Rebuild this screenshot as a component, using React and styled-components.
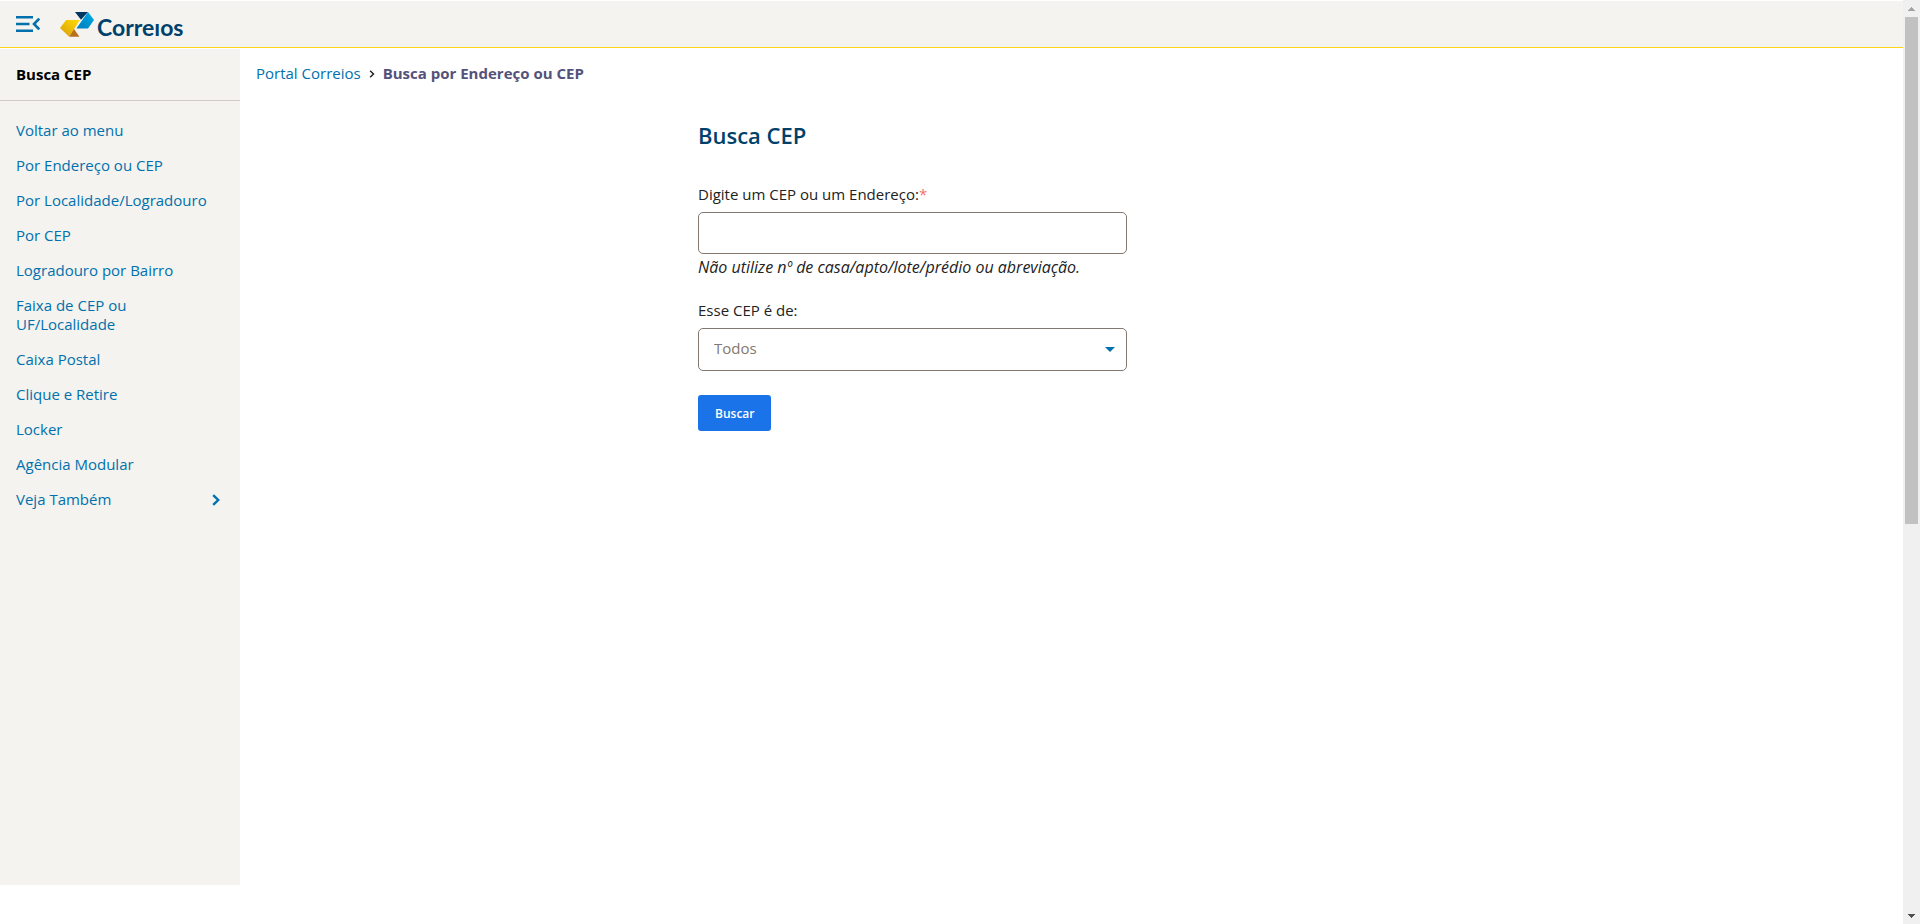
import React from "react";
import styled, { createGlobalStyle } from "styled-components";

const GlobalStyle = createGlobalStyle`
  *, *::before, *::after { box-sizing: border-box; }
  body {
    margin: 0;
    background: #fff;
    color: #222;
    font-family: "Trebuchet MS", "Open Sans", sans-serif;
    font-size: 15px;
    line-height: 19px;
  }
  button, input, select { font: inherit; }
`;

const Shell = styled.div`
  display: flex;
  min-height: 100vh;
`;

const Page = styled.div`
  flex: 1;
  min-width: 0;
`;

const Header = styled.header`
  display: flex;
  align-items: center;
  gap: 20px;
  height: 47px;
  margin-top: 1px;
  padding: 0 16px;
  background: #f4f3ef;
  border-bottom: 1px solid #ffd41a;
`;

const MenuButton = styled.button`
  display: flex;
  padding: 0;
  border: 0;
  background: none;
  color: #0071ad;
  cursor: pointer;
`;

const Brand = styled.a`
  display: flex;
  align-items: center;
  gap: 3px;
  color: #00416b;
  text-decoration: none;
`;

const BrandName = styled.span`
  padding-top: 6px;
  font-family: Lato, sans-serif;
  font-size: 23px;
  font-weight: 700;
  line-height: 24px;
`;

const Body = styled.div`
  display: flex;
  margin-top: 1px;
  min-height: calc(100vh - 88px);
`;

const Sidebar = styled.nav`
  flex: 0 0 240px;
  background: #f4f3ef;
`;

const SidebarTitle = styled.h2`
  margin: 0;
  padding: 16px;
  border-bottom: 1px solid #d1cbc7;
  color: #000;
  font-size: 15px;
  font-weight: 700;
  line-height: 19px;
`;

const Menu = styled.ul`
  display: flex;
  flex-direction: column;
  gap: 16px;
  margin: 0;
  padding: 20px 16px;
  list-style: none;
`;

const MenuLink = styled.a`
  display: flex;
  align-items: center;
  justify-content: space-between;
  padding-right: 4px;
  color: #0071ad;
  text-decoration: none;
`;

const MenuLabel = styled.span`
  white-space: pre-line;
`;

const Main = styled.main`
  flex: 1;
  min-width: 0;
  padding: 15px 16px;
`;

const Breadcrumb = styled.div`
  display: flex;
  align-items: center;
  gap: 8px;
`;

const CrumbLink = styled.a`
  color: #0071ad;
  text-decoration: none;
`;

const CrumbCurrent = styled.strong`
  color: #54527a;
  font-weight: 700;
`;

const Form = styled.form`
  max-width: 747px;
  margin: 38px auto 0;
`;

const FormTitle = styled.h1`
  margin: 0 0 36px;
  color: #00416b;
  font-size: 22px;
  font-weight: 600;
  line-height: 28px;
`;

const Field = styled.div`
  display: flex;
  flex-direction: column;
  width: 429px;
  max-width: 100%;
  margin-bottom: 24px;
`;

const Label = styled.label`
  margin-bottom: 8px;
`;

const Required = styled.span`
  color: #f0726a;
`;

const TextInput = styled.input`
  height: 42px;
  padding: 0 16px;
  border: 1px solid #83786f;
  border-radius: 5px;
  background: #fff;
  color: #83786f;
`;

const Hint = styled.em`
  margin-top: 4px;
  font-size: 16px;
`;

const SelectBox = styled.div`
  display: grid;
  align-items: center;
  > * { grid-area: 1 / 1; }
  > svg { justify-self: end; margin-right: 12px; pointer-events: none; }
`;

const Select = styled.select`
  width: 100%;
  height: 43px;
  padding: 0 32px 2px 15px;
  appearance: none;
  border: 1px solid #83786f;
  border-radius: 5px;
  background: #fff;
  color: #83786f;
`;

const SubmitButton = styled.button`
  height: 36px;
  padding: 0 17px;
  border: 0;
  border-radius: 3px;
  background: #1a73e8;
  color: #fff;
  font-size: 12px;
  font-weight: 600;
  cursor: pointer;
`;

const ScrollRail = styled.div`
  position: sticky;
  top: 0;
  display: flex;
  flex: 0 0 17px;
  flex-direction: column;
  align-items: center;
  height: 100vh;
  background: #f0f0f0;
`;

const ScrollArrow = styled.div`
  display: flex;
  flex: 0 0 17px;
  align-items: center;
  color: ${(p) => (p.$muted ? "#a3a3a3" : "#505050")};
`;

const ScrollTrack = styled.div`
  flex: 1;
  width: 13px;
`;

const ScrollThumb = styled.div`
  height: 57%;
  background: #c1c1c1;
`;

const menu = [
  "Voltar ao menu",
  "Por Endereço ou CEP",
  "Por Localidade/Logradouro",
  "Por CEP",
  "Logradouro por Bairro",
  "Faixa de CEP ou\nUF/Localidade",
  "Caixa Postal",
  "Clique e Retire",
  "Locker",
  "Agência Modular",
];

const MenuIcon = () => (
  <svg width="24" height="16" viewBox="0 0 24 16" fill="none" stroke="currentColor" strokeWidth="2.6" aria-hidden="true">
    <path d="M0 1.3H17M0 8H13.5M0 14.7H17M23.2 2.6L18 8l5.2 5.4" />
  </svg>
);

const Symbol = () => (
  <svg width="34" height="25" viewBox="0 0 34 25" aria-hidden="true">
    <defs>
      <linearGradient id="gold" x1="0" y1="1" x2="1" y2="0">
        <stop offset="0" stopColor="#d79b10" />
        <stop offset="1" stopColor="#ffdd00" />
      </linearGradient>
      <linearGradient id="sky" x1="0" y1="1" x2="1" y2="0">
        <stop offset="0" stopColor="#007cba" />
        <stop offset="1" stopColor="#00abea" />
      </linearGradient>
    </defs>
    <path d="M6.2 8H19.8L9.2 24.8L0 16Z" fill="url(#gold)" />
    <path d="M14 17L19.4 24.8H9.2Z" fill="#b96f1c" />
    <path d="M15 0H28L21 7.8Z" fill="#003660" />
    <path d="M28 0L34 8L28 16.4H16.4Z" fill="url(#sky)" />
  </svg>
);

const Chevron = ({ width, height, stroke }) => (
  <svg width={width} height={height} viewBox="0 0 8 12" fill="none" stroke="currentColor" strokeWidth={stroke} aria-hidden="true">
    <path d="M1.2 1.2L6.2 6L1.2 10.8" />
  </svg>
);

const StepTriangle = ({ down }) => (
  <svg width="7" height="4" viewBox="0 0 7 4" fill="currentColor" shapeRendering="crispEdges" aria-hidden="true">
    <path d={down ? "M0 0H7V1H6V2H5V3H4V4H3V3H2V2H1V1H0Z" : "M0 4H7V3H6V2H5V1H4V0H3V1H2V2H1V3H0Z"} />
  </svg>
);

export default function App() {
  return (
    <>
      <GlobalStyle />
      <Shell>
        <Page>
          <Header>
            <MenuButton type="button" aria-label="Menu">
              <MenuIcon />
            </MenuButton>
            <Brand href="#" aria-label="Correios">
              <Symbol />
              <BrandName>Correıos</BrandName>
            </Brand>
          </Header>
          <Body>
            <Sidebar>
              <SidebarTitle>Busca CEP</SidebarTitle>
              <Menu>
                {menu.map((item) => (
                  <li key={item}>
                    <MenuLink href="#">
                      <MenuLabel>{item}</MenuLabel>
                    </MenuLink>
                  </li>
                ))}
                <li>
                  <MenuLink href="#">
                    <MenuLabel>Veja Também</MenuLabel>
                    <Chevron width="8" height="12" stroke="2.4" />
                  </MenuLink>
                </li>
              </Menu>
            </Sidebar>
            <Main>
              <Breadcrumb>
                <CrumbLink href="#">Portal Correios</CrumbLink>
                <Chevron width="6" height="8" stroke="2.2" />
                <CrumbCurrent>Busca por Endereço ou CEP</CrumbCurrent>
              </Breadcrumb>
              <Form onSubmit={(e) => e.preventDefault()}>
                <FormTitle>Busca CEP</FormTitle>
                <Field>
                  <Label htmlFor="endereco">
                    Digite um CEP ou um Endereço:<Required>*</Required>
                  </Label>
                  <TextInput id="endereco" type="text" />
                  <Hint>Não utilize nº de casa/apto/lote/prédio ou abreviação.</Hint>
                </Field>
                <Field>
                  <Label htmlFor="tipo">Esse CEP é de:</Label>
                  <SelectBox>
                    <Select id="tipo">
                      <option>Todos</option>
                    </Select>
                    <svg width="10" height="5" viewBox="0 0 10 5" fill="#0071ad" aria-hidden="true">
                      <path d="M0 0H10L5 5Z" />
                    </svg>
                  </SelectBox>
                </Field>
                <SubmitButton type="submit">Buscar</SubmitButton>
              </Form>
            </Main>
          </Body>
        </Page>
        <ScrollRail aria-hidden="true">
          <ScrollArrow $muted>
            <StepTriangle />
          </ScrollArrow>
          <ScrollTrack>
            <ScrollThumb />
          </ScrollTrack>
          <ScrollArrow>
            <StepTriangle down />
          </ScrollArrow>
        </ScrollRail>
      </Shell>
    </>
  );
}
